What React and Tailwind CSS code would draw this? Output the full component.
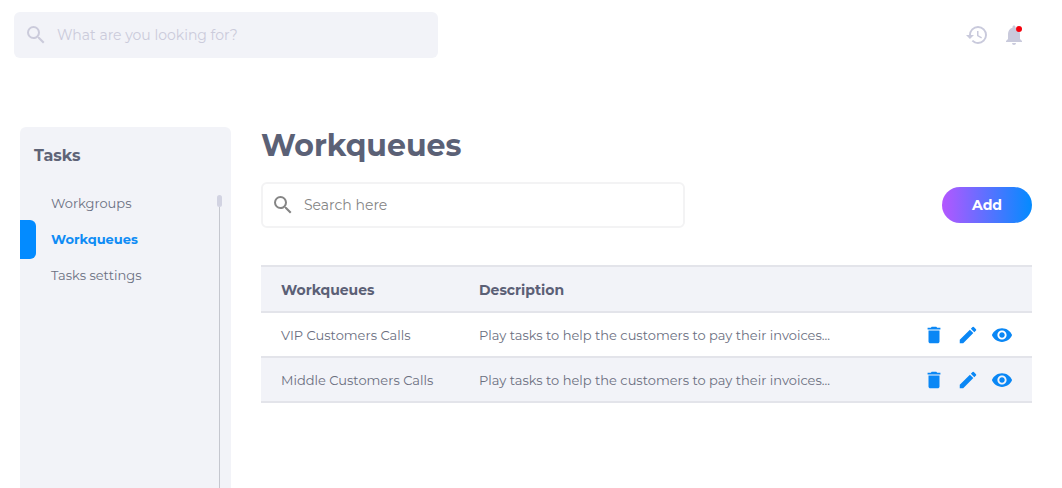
import { MdDelete, MdEdit, MdHistory, MdNotifications, MdSearch, MdVisibility } from "react-icons/md";

const navItems = [
  { label: "Workgroups", active: false },
  { label: "Workqueues", active: true },
  { label: "Tasks settings", active: false },
];

const rows = [
  { name: "VIP Customers Calls", description: "Play tasks to help the customers to pay their invoices..." },
  { name: "Middle Customers Calls", description: "Play tasks to help the customers to pay their invoices..." },
];

function Header() {
  return (
    <header className="flex items-center justify-between pt-3 pr-9 pl-3.5">
      <label className="flex h-[46px] w-full max-w-[424px] items-center gap-[9px] rounded-md bg-[#f2f3f8] pr-3 pl-2.5 text-[#cbcbdb]">
        <MdSearch className="size-6 shrink-0" aria-hidden="true" />
        <input
          type="search"
          aria-label="Search the site"
          placeholder="What are you looking for?"
          className="min-w-0 flex-1 bg-transparent text-sm outline-none placeholder:text-[#cbcbdb]"
        />
      </label>
      <div className="flex items-center gap-[13px] text-[#c9cadc]">
        <button type="button" aria-label="History">
          <MdHistory className="size-6" />
        </button>
        <button type="button" aria-label="Notifications" className="relative">
          <MdNotifications className="size-6" />
          <span className="absolute top-[3px] right-1 size-1.5 rounded-full bg-[#f5000c]" />
        </button>
      </div>
    </header>
  );
}

function Sidebar() {
  return (
    <aside className="flex w-[211px] shrink-0 flex-col rounded-t-md bg-[#f2f3f8] pt-[17px]">
      <h2 className="pl-3.5 text-base leading-6 font-bold text-[#5f6477]">Tasks</h2>
      <div className="mt-[18px] flex flex-1">
        <nav className="flex-1">
          <ul>
            {navItems.map((item) => (
              <li key={item.label} className="relative flex h-9 items-center">
                {item.active && <span className="absolute -top-0.5 left-0 h-[39px] w-4 rounded-r-md bg-[#038bff]" />}
                <a
                  href="#"
                  className={
                    item.active
                      ? "pl-[31px] text-[13px] font-bold text-[#0f8cf5]"
                      : "pl-[31px] text-[13px] text-[#6b7082]"
                  }
                >
                  {item.label}
                </a>
              </li>
            ))}
          </ul>
        </nav>
        <div className="mt-[9px] mr-[9px] flex w-[5px] flex-col items-center">
          <span className="h-3 w-full rounded-full bg-[#d2d3e2]" />
          <span className="w-px flex-1 bg-[#c5c7cf]" />
        </div>
      </div>
    </aside>
  );
}

function RowActions({ name }) {
  return (
    <div className="flex items-center justify-end gap-3 text-[#0a87f5]">
      <button type="button" aria-label={`Delete ${name}`}>
        <MdDelete className="size-[22px]" />
      </button>
      <button type="button" aria-label={`Edit ${name}`}>
        <MdEdit className="size-[22px]" />
      </button>
      <button type="button" aria-label={`View ${name}`}>
        <MdVisibility className="size-[22px]" />
      </button>
    </div>
  );
}

function WorkqueueTable() {
  return (
    <table className="mt-[37px] w-full border-collapse text-left">
      <thead>
        <tr className="h-[46px] border-y-2 border-[#e3e4ea] bg-[#f2f3f8] text-sm text-[#5b6076]">
          <th scope="col" className="w-[218px] pt-0.5 pl-5 font-bold">Workqueues</th>
          <th scope="col" className="pt-0.5 font-bold">Description</th>
          <td />
        </tr>
      </thead>
      <tbody>
        {rows.map((row) => (
          <tr key={row.name} className="h-[45px] border-b-2 border-[#e3e4ea] text-[13px] text-[#6b6f7f] even:bg-[#f2f3f8]">
            <td className="pt-0.5 pl-5">{row.name}</td>
            <td className="pt-0.5">{row.description}</td>
            <td className="pr-[19px]">
              <RowActions name={row.name} />
            </td>
          </tr>
        ))}
      </tbody>
    </table>
  );
}

export default function App() {
  return (
    <div className="flex min-h-screen flex-col bg-white font-['Montserrat','Inter',sans-serif]">
      <Header />
      <div className="mt-[69px] flex flex-1 gap-[30px] pr-[30px] pl-5">
        <Sidebar />
        <main className="min-w-0 flex-1">
          <h1 className="text-3xl leading-[38px] font-bold text-[#5b6176]">Workqueues</h1>
          <div className="mt-[17px] flex items-center justify-between gap-4">
            <label className="flex h-[46px] w-full max-w-[424px] items-center gap-[9px] rounded-md border-2 border-[#f3f3f4] pr-3 pl-2 text-[#858585]">
              <MdSearch className="size-6 shrink-0" aria-hidden="true" />
              <input
                type="search"
                aria-label="Search workqueues"
                placeholder="Search here"
                className="min-w-0 flex-1 bg-transparent text-sm outline-none placeholder:text-[#858585]"
              />
            </label>
            <button
              type="button"
              className="h-9 w-[90px] shrink-0 rounded-full bg-linear-to-r/srgb from-[#b457ff] to-[#038bff] text-sm font-bold text-white"
            >
              Add
            </button>
          </div>
          <WorkqueueTable />
        </main>
      </div>
    </div>
  );
}
